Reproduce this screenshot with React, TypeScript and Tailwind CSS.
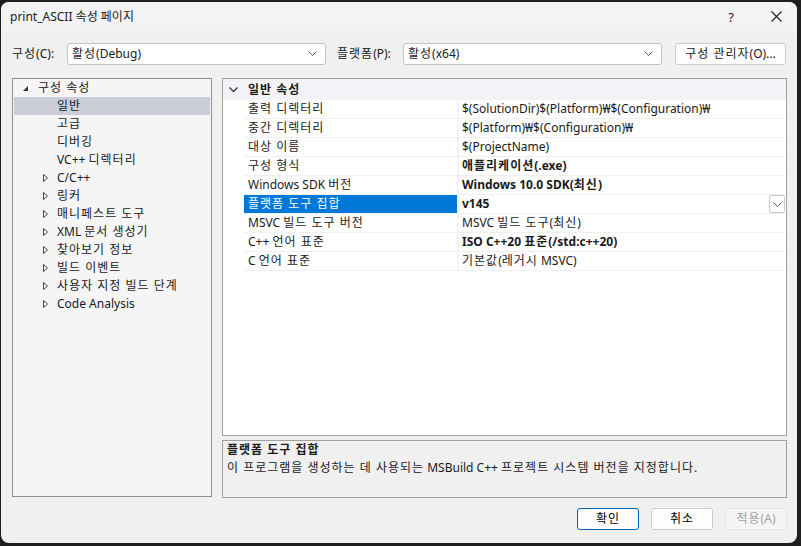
import React from 'react';

const treeItems: { label: string; level: 'root' | 'leaf' | 'group'; selected?: boolean }[] = [
  { label: '구성 속성', level: 'root' },
  { label: '일반', level: 'leaf', selected: true },
  { label: '고급', level: 'leaf' },
  { label: '디버깅', level: 'leaf' },
  { label: 'VC++ 디렉터리', level: 'leaf' },
  { label: 'C/C++', level: 'group' },
  { label: '링커', level: 'group' },
  { label: '매니페스트 도구', level: 'group' },
  { label: 'XML 문서 생성기', level: 'group' },
  { label: '찾아보기 정보', level: 'group' },
  { label: '빌드 이벤트', level: 'group' },
  { label: '사용자 지정 빌드 단계', level: 'group' },
  { label: 'Code Analysis', level: 'group' },
];

const props: { name: string; value: string; bold?: boolean; selected?: boolean }[] = [
  { name: '출력 디렉터리', value: '$(SolutionDir)$(Platform)₩$(Configuration)₩' },
  { name: '중간 디렉터리', value: '$(Platform)₩$(Configuration)₩' },
  { name: '대상 이름', value: '$(ProjectName)' },
  { name: '구성 형식', value: '애플리케이션(.exe)', bold: true },
  { name: 'Windows SDK 버전', value: 'Windows 10.0 SDK(최신)', bold: true },
  { name: '플랫폼 도구 집합', value: 'v145', bold: true, selected: true },
  { name: 'MSVC 빌드 도구 버전', value: 'MSVC 빌드 도구(최신)' },
  { name: 'C++ 언어 표준', value: 'ISO C++20 표준(/std:c++20)', bold: true },
  { name: 'C 언어 표준', value: '기본값(레거시 MSVC)' },
];

// Malgun Gothic sets hangul a bit wider than Noto CJK, so pad hangul runs
function K({ text }: { text: string }) {
  const parts = text.split(/([\uac00-\ud7a3](?:[\uac00-\ud7a3 ]*[\uac00-\ud7a3])?)/);
  return (
    <>
      {parts.map((p, i) =>
        i % 2 === 1 ? (
          <span key={i} className="tracking-[1px]">
            {p}
          </span>
        ) : (
          <React.Fragment key={i}>{p}</React.Fragment>
        )
      )}
    </>
  );
}

function Chevron({ className = '' }: { className?: string }) {
  return (
    <svg width="9" height="5" viewBox="0 0 9 5" className={className}>
      <path d="M0.5 0.5 L4.5 4.5 L8.5 0.5" fill="none" stroke="#555" strokeWidth="1" />
    </svg>
  );
}

function Combo({ value }: { value: string }) {
  return (
    <div className="w-[259px] h-[22px] flex items-center justify-between bg-white border border-[#c4c4c4] rounded-[3px] pl-[4px] pr-[8px]">
      <span className="leading-[16px]">
        <K text={value} />
      </span>
      <Chevron />
    </div>
  );
}

function Button({ label, primary, disabled }: { label: string; primary?: boolean; disabled?: boolean }) {
  return (
    <div
      className={
        'w-[62px] h-[22px] flex items-center justify-center rounded-[3px] border leading-[16px] ' +
        (primary
          ? 'bg-[#fdfdfd] border-[#0067c0] text-black'
          : disabled
          ? 'bg-[#f5f5f5] border-[#e4e4e4] text-[#a0a0a0]'
          : 'bg-[#fdfdfd] border-[#cdcdcd] text-black')
      }
    >
      <K text={label} />
    </div>
  );
}

export default function App() {
  return (
    <div className="w-[801px] h-[546px] bg-[#1e1e1e] pt-[2px] pl-[1px] overflow-hidden font-['Noto_Sans','Noto_Sans_CJK_KR',sans-serif] text-[12px] text-[#1a1a1a]">
      <div className="w-[796px] h-[541px] rounded-[8px] bg-[#f0f0f0] overflow-hidden flex flex-col">
        {/* title bar */}
        <div className="h-[29px] shrink-0 bg-[#f3f3f5] flex items-center pl-[9px]">
          <span className="leading-[16px]">print_ASCII 속성 페이지</span>
          <span className="ml-auto leading-[16px] text-[13px] mr-[37px]">?</span>
          <svg width="11" height="11" viewBox="0 0 11 11" className="mr-[15px]">
            <path d="M0.5 0.5 L10.5 10.5 M10.5 0.5 L0.5 10.5" stroke="#222" strokeWidth="1.1" />
          </svg>
        </div>

        <div className="flex-1 flex flex-col pl-[11px] pr-[10px]">
          {/* configuration row */}
          <div className="mt-[11px] h-[23px] flex items-center">
            <span className="w-[55px] leading-[16px]">
              <K text="구성(C):" />
            </span>
            <Combo value="활성(Debug)" />
            <span className="ml-[11px] w-[66px] leading-[16px]">
              <K text="플랫폼(P):" />
            </span>
            <Combo value="활성(x64)" />
            <div className="ml-[13px] w-[111px] h-[22px] flex items-center justify-center bg-[#fdfdfd] border border-[#cdcdcd] rounded-[3px] leading-[16px]">
              <K text="구성 관리자(O)..." />
            </div>
          </div>

          {/* panels */}
          <div className="mt-[13px] flex gap-[10px] h-[420px]">
            {/* tree */}
            <div className="w-[200px] h-[419px] border border-[#8b8e93] bg-[#f5f5f5] p-[1px] pt-0">
              {treeItems.map((t) => (
                <div
                  key={t.label}
                  className={'h-[18px] flex items-center ' + (t.selected ? 'bg-[#cbcdd8]' : '')}
                >
                  {t.level === 'root' && (
                    <>
                      <svg width="5" height="5" viewBox="0 0 5 5" className="ml-[9px] mt-[1px]">
                        <path d="M5 0 L5 5 L0 5 Z" fill="#333" />
                      </svg>
                      <span className="ml-[10px] leading-[16px]">
                        <K text={t.label} />
                      </span>
                    </>
                  )}
                  {t.level === 'leaf' && (
                    <span className="ml-[43px] leading-[16px]">
                      <K text={t.label} />
                    </span>
                  )}
                  {t.level === 'group' && (
                    <>
                      <svg width="5" height="8" viewBox="0 0 5 8" className="ml-[29px]">
                        <path d="M0.5 0.5 L4.5 4 L0.5 7.5 Z" fill="none" stroke="#444" strokeWidth="1" />
                      </svg>
                      <span className="ml-[9px] leading-[16px]">
                        <K text={t.label} />
                      </span>
                    </>
                  )}
                </div>
              ))}
            </div>

            {/* property grid + description */}
            <div className="w-[565px] flex flex-col">
              <div className="h-[358px] border border-[#a0a0a0] bg-white flex flex-col">
                <div className="h-[21px] bg-[#f2f3f7] flex items-center">
                  <svg width="9" height="5" viewBox="0 0 9 5" className="ml-[6px]">
                    <path d="M0.5 0.5 L4.5 4.5 L8.5 0.5" fill="none" stroke="#333" strokeWidth="1.3" />
                  </svg>
                  <span className="ml-[10px] font-bold leading-[16px]">
                    <K text="일반 속성" />
                  </span>
                </div>
                {props.map((p) => (
                  <div key={p.name} className="h-[19px] flex">
                    <div className="w-[21px] shrink-0" />
                    <div className="flex-1 flex border-b border-[#f0f0f0]">
                      <div
                        className={
                          'w-[213px] shrink-0 flex items-center pl-[4px] ' +
                          (p.selected ? 'bg-[#0078d7] text-white' : '')
                        }
                      >
                        <span className="leading-[16px]">
                          <K text={p.name} />
                        </span>
                      </div>
                      <div className="w-[2px] shrink-0 bg-[#f4f4f4]" />
                      <div className="flex-1 flex items-center pl-[3px]">
                        <span className={'leading-[16px] ' + (p.bold ? 'font-bold' : '')}>
                          <K text={p.value} />
                        </span>
                        {p.selected && (
                          <div className="ml-auto mr-[1px] w-[16px] h-[18px] border border-[#c8c8c8] rounded-[2px] bg-white flex items-center justify-center">
                            <Chevron />
                          </div>
                        )}
                      </div>
                    </div>
                  </div>
                ))}
              </div>
              <div className="mt-[4px] h-[58px] border border-[#a0a0a0] bg-[#f0f0f0] px-[4px] pt-[1px]">
                <div className="font-bold leading-[16px] h-[17px]">
                  <K text="플랫폼 도구 집합" />
                </div>
                <div className="leading-[16px] mt-[1px]">
                  <K text="이 프로그램을 생성하는 데 사용되는 MSBuild C++ 프로젝트 시스템 버전을 지정합니다." />
                </div>
              </div>
            </div>
          </div>

          {/* bottom buttons */}
          <div className="mt-[10px] flex justify-end gap-[12px]">
            <Button label="확인" primary />
            <Button label="취소" />
            <Button label="적용(A)" disabled />
          </div>
        </div>
      </div>
    </div>
  );
}
